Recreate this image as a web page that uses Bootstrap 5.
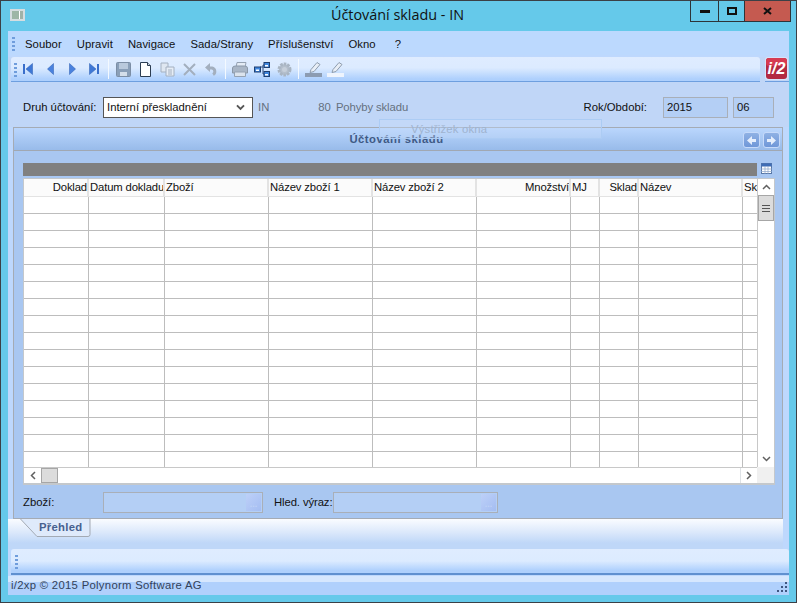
<!doctype html>
<html lang="cs"><head><meta charset="utf-8"><title>Účtování skladu - IN</title>
<link rel="stylesheet" href="https://cdn.jsdelivr.net/npm/bootstrap@5.3.0/dist/css/bootstrap.min.css">
<style>
html,body{margin:0;height:603px;width:797px;overflow:hidden;background:#65c9ea}
body{font:11.3px/14px "Liberation Sans",sans-serif;color:#111}
.win{width:797px;height:603px;border:1px solid #3b4046;background:#65c9ea}
.titlebar{height:30px;position:relative;padding:8px 0 0 9px}
.appicon{width:15px;height:12px;background:linear-gradient(90deg,#9db6a6 0 62%,#fff 62% 72%,#9fb2a8 72%);border:2px solid #d5dde0}
.titletext{position:absolute;left:0;right:2px;top:4px;text-align:center;font:14.4px/20px "Open Sans",sans-serif;color:#111}
.caps{position:absolute;right:5px;top:0;height:21px;border:1px solid #2d3439;border-top:0}
.cap{height:20px;display:flex;align-items:center;justify-content:center}
.cap1{width:28px;border-right:1px solid #2d3439}.cap2{width:26px;border-right:1px solid #2d3439}
.cap3{width:45px;background:#c55a50}
.client{margin:0 7px 0 7px;height:564px;width:781px;background:#bed8fd;position:relative}
.menubar{height:24px;padding-left:4px;background:#bcd9fe}
.grip{width:3px;height:15px;align-self:center;background-image:radial-gradient(circle,#6f9ddc 1.2px,transparent 1.5px);background-size:3px 4px}
.menuitems{margin-left:10px;gap:15px;padding-top:6px;letter-spacing:.05px}
.tool-wrap{margin-top:2px;height:25px;background:#c0d6f7}
.toolstrip{width:752px;margin-left:3px;height:25px;padding-left:3px;background:linear-gradient(#dfecff 0,#dcebff 45%,#aed0fd 92%);border-bottom:1px solid #6e9fdf;border-radius:3px 3px 0 0}
.tcell{width:22px;height:22px;display:flex;align-items:center;justify-content:center}
.tsep{width:1px;height:20px;background:#f3f9ff;margin:0 3px 0 3px}
.logo{margin-left:5px;width:24px;height:25px;border-bottom:1px solid #6e9fdf}
.formrow{height:45px;background:#c0d6f7;padding:15px 15px 0 15px}
.ftext{line-height:21px}
.lblw{width:80px}
.selectbox.form-select{width:150px;height:21px;padding:0 0 0 3px;font:11.3px/19px "Liberation Sans",sans-serif;border:1px solid #555;border-radius:0;color:#111;background-image:url("data:image/svg+xml,%3csvg xmlns='http://www.w3.org/2000/svg' viewBox='0 0 10 8'%3e%3cpath d='M1 1.500l4 4 4-4' fill='none' stroke='%23555' stroke-width='2.200'/%3e%3c/svg%3e");background-size:9px 7px;background-position:right 7px center}
.mute{color:#65717f}
.gap-in{margin-left:5px}.gap-80{margin-left:49px}.gap-pohyby{margin-left:5px;letter-spacing:-.1px}
.rok{margin-left:auto}
.inbox{height:21px;background:#b4cff5;border:1px solid #a9afb8;padding-left:3px;line-height:19px}
.box-rok{width:65px;margin-left:16px}.box-obd{width:41px;margin-left:5px}
.panel-main{margin:0 6px 0 5px;height:392px;background:#a9c7f1;border:1px solid #a5abb4;position:relative}
.panelhead{height:23px;background:linear-gradient(#bad6fd,#98bbea);border-bottom:1px solid #a1a8b2;position:relative}
.paneltitle{font-weight:700;color:#3f5a85;text-align:center;line-height:22px;letter-spacing:.5px;padding-right:3px}
.navs{position:absolute;right:2px;top:4px;gap:3px}
.navb{width:17px;height:16px;border-radius:3px;background:linear-gradient(#8fb1e4,#6f97d8);border:1px solid #c6dafa;display:flex;align-items:center;justify-content:center}
.barrow{margin:12px 0 0 9px;height:14px}
.greybar{width:734px;height:13px;background:#808080}
.gridbox{margin:1px 0 0 9px;width:752px;height:307px;background:#fff;border:1px solid #c4c8cc;border-bottom-width:2px;display:grid;grid-template-columns:1fr 17px;grid-template-rows:1fr 16px}
.tablearea{overflow:hidden;min-width:0;min-height:0}
.gtable{table-layout:fixed;border-collapse:collapse;width:734px;font-size:11.3px;letter-spacing:-.15px}
.gtable th{height:17px;padding:0 0 0 1px;font-weight:400;background:#fbfbfb;border-bottom:1px solid #e3e3e3;border-right:2px solid #e3e3e3;white-space:nowrap;overflow:hidden;line-height:14px}
.gtable td{height:17px;padding:0;border-bottom:1px solid #bdbdbd;border-right:1px solid #bdbdbd}
.c64{width:64px}.c76{width:76px}.c104{width:104px}.c94{width:94px}.c29{width:29px}.c39{width:39px}.c16{width:16px}
.sbv{display:flex;flex-direction:column;border-left:1px solid #c8c8c8}
.sbbtn{height:16px;display:flex;align-items:center;justify-content:center;background:#fff}
.thumbv{height:26px;background:#dcdcdc;border:1px solid #a6a6a6;display:flex;align-items:center;justify-content:center}
.sbh{display:flex;border-top:1px solid #c8c8c8;background:#fff}
.sbhb{width:17px;display:flex;align-items:center;justify-content:center}
.thumbh{width:17px;background:#dcdcdc;border:1px solid #a6a6a6}
.corner{background:#f0f0f0}
.filterrow{margin:7px 0 0 9px;height:21px}
.fbox{height:21px;background:#b4cff5;border:1px solid #a9afb8;padding:1px}
.fbox-a{width:160px}.fbox-b{width:165px}
.hled{margin-left:11px;width:59px;white-space:nowrap;letter-spacing:-.1px}
.fbtn{width:15px;height:17px;background:linear-gradient(135deg,#bdd0f8,#a4bdf2);color:#bed1f6;font:700 9px/20px "Liberation Sans",sans-serif;text-align:center}
.tabsarea{height:30px;background:linear-gradient(#fafcff 0,#dbe8fb 45%,#bfd7f8 80%);width:775px;padding-left:12px}
.tabshape{width:72px;height:19px;position:relative}
.tabshape svg{position:absolute;left:0;top:0}
.tablabel{position:absolute;left:19px;top:1px;font-weight:700;color:#46608f;letter-spacing:.3px}
.bottomstrip{height:26px;background:#bed8fd}
.bstrip{height:26px;margin-left:3px;padding-left:4px;background:linear-gradient(#dfecff 0,#dcebff 50%,#aed0fd 90%);border-bottom:2px solid #5f90d0;border-radius:3px 3px 0 0}
.statusbar{height:19px;margin-top:1px;padding:0 0 0 3px;background:linear-gradient(#d6e7fe 0 33%,#b0d0fc 33%);color:#33425a;line-height:19px;position:relative;letter-spacing:.3px}
.sizegrip{position:absolute;right:1px;bottom:2px}
.ghost{position:absolute;left:371px;top:88px;width:223px;height:20px;border:1px solid #acccf4;background:rgba(200,220,250,.35);color:#9fb3cf;padding-left:31px;line-height:18px;letter-spacing:.2px}
</style></head>
<body>
<div class="win">
 <div class="titlebar">
  <div class="appicon"></div>
  <div class="titletext">Účtování skladu - IN</div>
  <div class="caps d-flex">
   <div class="cap cap1"><svg width="10" height="4"><rect width="10" height="3" y="1" fill="#111"/></svg></div>
   <div class="cap cap2"><svg width="10" height="8"><rect x="1" y="1" width="8" height="6" fill="none" stroke="#111" stroke-width="2"/></svg></div>
   <div class="cap cap3"><svg width="9" height="8"><path d="M1 1l7 6M8 1l-7 6" stroke="#111" stroke-width="2"/></svg></div>
  </div>
 </div>
 <div class="client">
  <div class="menubar d-flex">
   <div class="grip"></div>
   <div class="menuitems d-flex"><span>Soubor</span><span>Upravit</span><span>Navigace</span><span>Sada/Strany</span><span>Příslušenství</span><span>Okno</span><span class="ms-1">?</span></div>
  </div>
  <div class="tool-wrap d-flex">
   <div class="toolstrip d-flex align-items-center">
    <div class="grip"></div>
    <div class="d-flex align-items-center">
     <div class="tcell"><svg width="10" height="12"><rect x="0" y="1" width="2" height="10" fill="#3a6fcb"/><path d="M9.500 .5v11L3 6z" fill="#3f78d6" stroke="#2b5cb0" stroke-width=".5"/></svg></div>
     <div class="tcell"><svg width="7" height="12"><path d="M6.500 .5v11L.5 6z" fill="#4a82de" stroke="#2b5cb0" stroke-width=".5"/></svg></div>
     <div class="tcell"><svg width="7" height="12"><path d="M.5 .5v11l6-5.500z" fill="#4a82de" stroke="#2b5cb0" stroke-width=".5"/></svg></div>
     <div class="tcell"><svg width="10" height="12"><rect x="8" y="1" width="2" height="10" fill="#3a6fcb"/><path d="M.5 .5v11L7 6z" fill="#3f78d6" stroke="#2b5cb0" stroke-width=".5"/></svg></div>
     <div class="tsep"></div>
     <div class="tcell"><svg width="15" height="15"><rect x=".5" y=".5" width="14" height="14" rx="1" fill="#8a9fb8" stroke="#7c8ea5"/><rect x="3" y="1" width="9" height="6" fill="#b9c9dc"/><rect x="4" y="10" width="7" height="4" fill="#d4deea"/></svg></div>
     <div class="tcell"><svg width="11" height="15"><path d="M.5.5h7l3 3v11H.5z" fill="#fff" stroke="#2c3d52"/><path d="M7.500 .5v3h3" fill="#cfd8e3" stroke="#2c3d52"/></svg></div>
     <div class="tcell"><svg width="15" height="15"><path d="M1 1h7v9H1z" fill="#dfe7f1" stroke="#a4b0c0"/><path d="M6 5h8v9H6z" fill="#e6edf6" stroke="#a4b0c0"/><path d="M8 8h4M8 10h4M8 12h4" stroke="#a4b0c0"/></svg></div>
     <div class="tcell"><svg width="13" height="13"><path d="M1 1l11 11M12 1L1 12" stroke="#a3afbe" stroke-width="2"/></svg></div>
     <div class="tcell"><svg width="12" height="13"><path d="M4 5h3a3.500 3.500 0 0 1 1 6.500" fill="none" stroke="#a3afbe" stroke-width="3"/><path d="M0 4.500L5 0v9z" fill="#a3afbe"/></svg></div>
     <div class="tsep"></div>
     <div class="tcell"><svg width="16" height="15"><path d="M5 .5h9l-1 5H4z" fill="#e4ecf5" stroke="#95a2b2"/><path d="M.5 6q0-2 3-2h9q3 0 3 2v5H.5z" fill="#a9b6c6" stroke="#8b98a8"/><path d="M2.500 10h11v4.500h-11z" fill="#dbe3ec" stroke="#95a2b2"/></svg></div>
     <div class="tcell"><svg width="16" height="15"><path d="M6 5h3M9 3v9M9 3h2M9 12h2" stroke="#2c4f84" fill="none"/><rect x=".5" y="5" width="6" height="5" fill="#3f86de" stroke="#1f3f70"/><rect x="10" y=".5" width="5.500" height="5" fill="#3f86de" stroke="#1f3f70"/><rect x="10" y="9.500" width="5.500" height="5" fill="#3f86de" stroke="#1f3f70"/><rect x="2" y="7.500" width="3" height="1.500" fill="#fff"/><rect x="11" y="3" width="3" height="1.500" fill="#fff"/><rect x="11" y="12" width="3" height="1.500" fill="#fff"/></svg></div>
     <div class="tcell"><svg width="15" height="15"><circle cx="7.500" cy="7.500" r="5.500" fill="#b4bfcc" stroke="#a9b5c3" stroke-width="3" stroke-dasharray="2.500 1"/><circle cx="7.500" cy="7.500" r="2.500" fill="#c6cfda"/></svg></div>
     <div class="tsep"></div>
     <div class="tcell"><svg width="17" height="15"><path d="M12 .5l3 2-6 7-4 1 1-3z" fill="#e8eef6" stroke="#8e9cad"/><rect y="11" width="17" height="4" fill="#8c9cb2"/></svg></div>
     <div class="tcell"><svg width="17" height="15"><path d="M12 .5l3 2-6 7-4 1 1-3z" fill="#e8eef6" stroke="#8e9cad"/><rect y="11" width="17" height="4" fill="#eef4fd"/></svg></div>
    </div>
   </div>
   <div class="logo"><svg width="23" height="23"><rect width="23" height="23" rx="3" fill="#fff" opacity=".35"/><rect x="1" y="1" width="21" height="21" rx="3" fill="#b32a42"/><rect x="1" y="1" width="21" height="8" rx="3" fill="#d63b52"/><text x="11.500" y="17" text-anchor="middle" font-family="Liberation Sans" font-size="16" font-weight="700" font-style="italic" fill="#fff">i/2</text></svg></div>
  </div>
  <div class="formrow d-flex">
   <span class="ftext lblw">Druh účtování:</span>
   <select class="form-select selectbox"><option>Interní přeskladnění</option></select>
   <span class="ftext mute gap-in">IN</span>
   <span class="ftext mute gap-80">80</span>
   <span class="ftext mute gap-pohyby">Pohyby skladu</span>
   <span class="ftext rok">Rok/Období:</span>
   <div class="inbox box-rok">2015</div>
   <div class="inbox box-obd">06</div>
  </div>
  <div class="panel-main">
   <div class="panelhead">
    <div class="paneltitle">Účtování skladu</div>
    <div class="navs d-flex">
     <div class="navb"><svg width="9" height="9"><path d="M0 4.500L5 0v3h4v3H5v3z" fill="#e5eefc"/></svg></div>
     <div class="navb"><svg width="9" height="9"><path d="M9 4.500L4 0v3H0v3h4v3z" fill="#e5eefc"/></svg></div>
    </div>
   </div>
   <div class="barrow d-flex">
    <div class="greybar"></div>
    <svg class="ms-1" width="11" height="11"><rect x=".5" y=".5" width="10" height="10" fill="#fff" stroke="#5677a8"/><rect x=".5" y=".5" width="10" height="3" fill="#3f6db5"/><path d="M4 3v8M7 3v8M0 6h11M0 8.500h11" stroke="#8aa4c8" stroke-width=".7"/></svg>
   </div>
   <div class="gridbox">
    <div class="tablearea">
     <table class="gtable">
      <colgroup><col class="c64"><col class="c76"><col class="c104"><col class="c104"><col class="c104"><col class="c94"><col class="c29"><col class="c39"><col class="c104"><col class="c16"></colgroup>
      <thead><tr><th class="text-end">Doklad</th><th>Datum dokladu</th><th>Zboží</th><th>Název zboží 1</th><th>Název zboží 2</th><th class="text-end">Množství</th><th>MJ</th><th class="text-end">Sklad</th><th>Název</th><th>Sk</th></tr></thead>
      <tbody><tr><td></td><td></td><td></td><td></td><td></td><td></td><td></td><td></td><td></td><td></td></tr><tr><td></td><td></td><td></td><td></td><td></td><td></td><td></td><td></td><td></td><td></td></tr><tr><td></td><td></td><td></td><td></td><td></td><td></td><td></td><td></td><td></td><td></td></tr><tr><td></td><td></td><td></td><td></td><td></td><td></td><td></td><td></td><td></td><td></td></tr><tr><td></td><td></td><td></td><td></td><td></td><td></td><td></td><td></td><td></td><td></td></tr><tr><td></td><td></td><td></td><td></td><td></td><td></td><td></td><td></td><td></td><td></td></tr><tr><td></td><td></td><td></td><td></td><td></td><td></td><td></td><td></td><td></td><td></td></tr><tr><td></td><td></td><td></td><td></td><td></td><td></td><td></td><td></td><td></td><td></td></tr><tr><td></td><td></td><td></td><td></td><td></td><td></td><td></td><td></td><td></td><td></td></tr><tr><td></td><td></td><td></td><td></td><td></td><td></td><td></td><td></td><td></td><td></td></tr><tr><td></td><td></td><td></td><td></td><td></td><td></td><td></td><td></td><td></td><td></td></tr><tr><td></td><td></td><td></td><td></td><td></td><td></td><td></td><td></td><td></td><td></td></tr><tr><td></td><td></td><td></td><td></td><td></td><td></td><td></td><td></td><td></td><td></td></tr><tr><td></td><td></td><td></td><td></td><td></td><td></td><td></td><td></td><td></td><td></td></tr><tr><td></td><td></td><td></td><td></td><td></td><td></td><td></td><td></td><td></td><td></td></tr><tr><td></td><td></td><td></td><td></td><td></td><td></td><td></td><td></td><td></td><td></td></tr></tbody>
     </table>
    </div>
    <div class="sbv">
     <div class="sbbtn"><svg width="9" height="6"><path d="M1 5l3.500-3.500L8 5" fill="none" stroke="#606060" stroke-width="1.500"/></svg></div>
     <div class="thumbv"><svg width="8" height="7"><path d="M0 .5h8M0 3.500h8M0 6.500h8" stroke="#555"/></svg></div>
     <div class="flex-grow-1"></div>
     <div class="sbbtn"><svg width="9" height="6"><path d="M1 1l3.500 3.500L8 1" fill="none" stroke="#606060" stroke-width="1.500"/></svg></div>
    </div>
    <div class="sbh">
     <div class="sbhb"><svg width="6" height="9"><path d="M5 1L1.500 4.500 5 8" fill="none" stroke="#606060" stroke-width="1.500"/></svg></div>
     <div class="thumbh"></div>
     <div class="flex-grow-1"></div>
     <div class="sbhb border-start"><svg width="6" height="9"><path d="M1 1l3.500 3.500L1 8" fill="none" stroke="#606060" stroke-width="1.500"/></svg></div>
    </div>
    <div class="corner"></div>
   </div>
   <div class="filterrow d-flex">
    <span class="ftext lblw">Zboží:</span>
    <div class="fbox fbox-a d-flex justify-content-end"><div class="fbtn">...</div></div>
    <span class="ftext hled">Hled. výraz:</span>
    <div class="fbox fbox-b d-flex justify-content-end"><div class="fbtn">...</div></div>
   </div>
  </div>
  <div class="tabsarea">
   <div class="tabshape">
    <svg width="72" height="19"><path d="M.5 0L17 17.500H68Q70 17.500 70 15.500V0" fill="#dfeafb" stroke="#a3aab4"/></svg>
    <div class="tablabel">Přehled</div>
   </div>
  </div>
  <div class="bottomstrip">
   <div class="bstrip d-flex align-items-center"><div class="grip"></div></div>
  </div>
  <div class="statusbar">i/2xp © 2015 Polynorm Software AG
   <svg class="sizegrip" width="11" height="11"><path d="M8 0h2v2H8zM4 4h2v2H4zM8 4h2v2H8zM0 8h2v2H0zM4 8h2v2H4zM8 8h2v2H8z" fill="#3e5680"/></svg>
  </div>
  <div class="ghost">Výstřižek okna</div>
 </div>
</div>
<script src="https://cdn.jsdelivr.net/npm/bootstrap@5.3.0/dist/js/bootstrap.bundle.min.js"></script>
</body></html>
